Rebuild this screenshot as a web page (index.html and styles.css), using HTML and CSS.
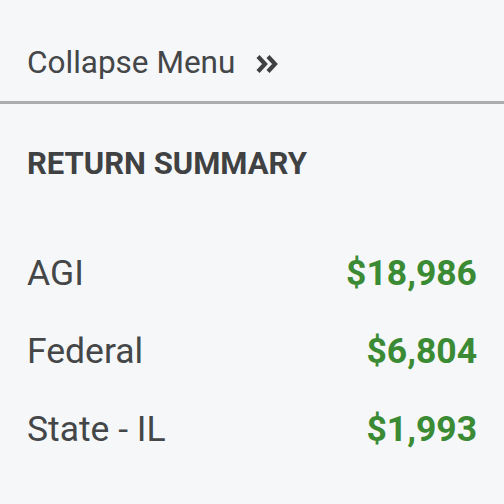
FILE: index.html
```html
<!DOCTYPE html>
<html>
<head>
<meta charset="utf-8">
<link rel="stylesheet" href="styles.css">
</head>
<body>
<div class="panel">
  <div class="collapse">
    <span class="collapse-label">Collapse Menu</span>
    <svg class="chev" width="24" height="20" viewBox="0 0 24 20"><path d="M3 2.5 L10 10 L3 17.5 M13 2.5 L20 10 L13 17.5" fill="none" stroke="#3f4142" stroke-width="4.2" stroke-linejoin="miter"/></svg>
  </div>
  <div class="summary">
    <h2 class="title">RETURN SUMMARY</h2>
    <div class="rows">
      <div class="row"><span class="label">AGI</span><span class="amount">$18,986</span></div>
      <div class="row"><span class="label">Federal</span><span class="amount">$6,804</span></div>
      <div class="row"><span class="label">State - IL</span><span class="amount">$1,993</span></div>
    </div>
  </div>
</div>
</body>
</html>
```
FILE: styles.css
```css
html, body {
  margin: 0;
  padding: 0;
  background: #f5f7f9;
}
body {
  font-family: Roboto, "Liberation Sans", sans-serif;
  color: #444648;
  width: 504px;
  height: 504px;
  overflow: hidden;
}
.collapse {
  display: flex;
  align-items: center;
  gap: 20px;
  padding: 47px 27px 22px;
  border-bottom: 3px solid #acacac;
}
.collapse-label {
  font-size: 31.5px;
  line-height: 32px;
}
.chev {
  display: block;
  margin-top: 1px;
}
.summary {
  padding: 44px 27px 0;
}
.title {
  margin: 0;
  font-size: 31px;
  line-height: 32px;
  font-weight: 700;
  color: #3f4142;
}
.rows {
  display: flex;
  flex-direction: column;
  gap: 42px;
  margin-top: 75px;
}
.row {
  display: flex;
  justify-content: space-between;
  align-items: baseline;
  font-size: 35.5px;
  line-height: 36px;
}
.amount {
  font-weight: 700;
  color: #3b8a34;
}
```
